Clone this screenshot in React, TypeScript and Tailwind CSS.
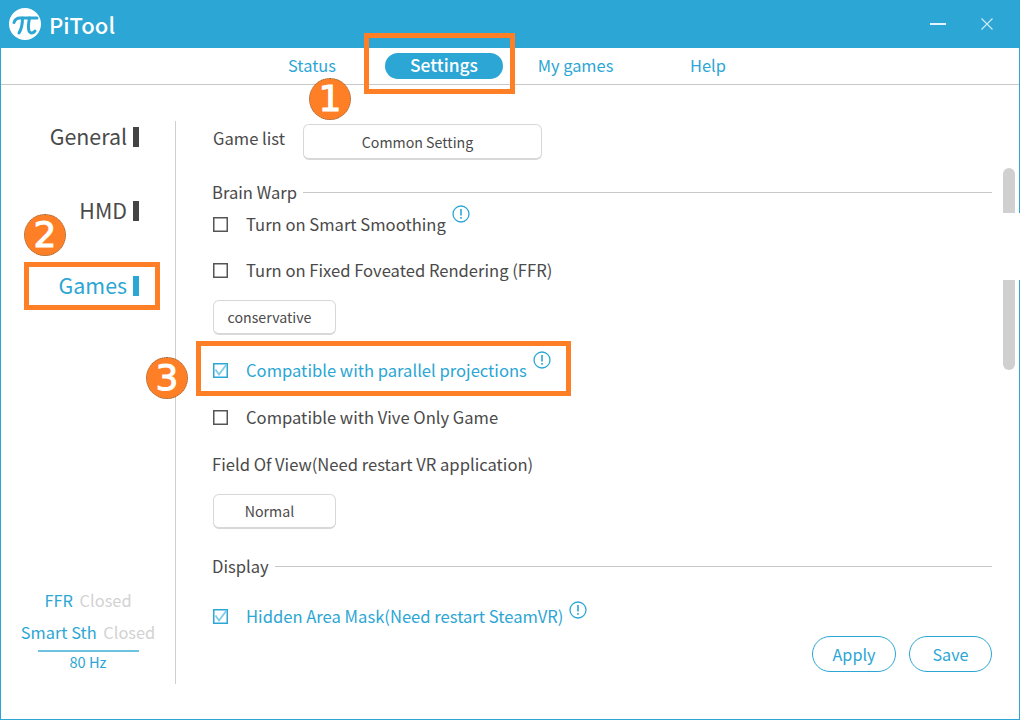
import { type FunctionComponent } from "react";

const font = { fontFamily: '"Noto Sans CJK SC", "Noto Sans", sans-serif' };

const Checkbox: FunctionComponent<{ checked?: boolean }> = ({ checked }) => (
    <svg width="15" height="15" viewBox="0 0 15 15" className="shrink-0 ml-px" fill="none">
        {checked ? (
            <>
                <rect x="0.75" y="0.75" width="13.5" height="13.5" stroke="#2ca6d4" strokeWidth="1.5" />
                <path d="M2.5 6.5 L6 11.5 L13.5 1.5" stroke="#7fcbe6" strokeWidth="1.8" />
            </>
        ) : (
            <rect x="0.75" y="0.75" width="13.5" height="13.5" stroke="#555" strokeWidth="1.5" />
        )}
    </svg>
);

const Info = () => (
    <svg width="18" height="18" viewBox="0 0 18 18" fill="none" className="shrink-0">
        <circle cx="9" cy="9" r="8" stroke="#2ca6d4" strokeWidth="1.3" />
        <path d="M9 4 V10.5" stroke="#2ca6d4" strokeWidth="1.6" />
        <path d="M9 12 V13.8" stroke="#2ca6d4" strokeWidth="1.6" />
    </svg>
);

const CheckRow: FunctionComponent<{ label: string; checked?: boolean; info?: boolean; infoLow?: boolean; className: string }> = ({
    label,
    checked,
    info,
    infoLow,
    className,
}) => (
    <div className={`flex items-center h-[24px] ${className}`}>
        <Checkbox checked={checked} />
        <span className={`ml-[18px] text-[16.6px] leading-[24px] -mt-px whitespace-nowrap ${checked ? "text-[#2ca6d4]" : "text-[#4a4a4a]"}`}>
            {label}
        </span>
        {info && (
            <span className={`ml-[6px] ${infoLow ? "-mt-[12px]" : "-mt-[21px]"}`}>
                <Info />
            </span>
        )}
    </div>
);

const SectionTitle: FunctionComponent<{ label: string; className: string }> = ({ label, className }) => (
    <div className={`flex items-center h-[24px] ${className}`}>
        <span className="text-[16.6px] leading-[24px] -mt-px text-[#4a4a4a] whitespace-nowrap">{label}</span>
        <div className="flex-1 h-px bg-[#c8c8c8] ml-[6px]" />
    </div>
);

const SelectBox: FunctionComponent<{ label: string; className: string }> = ({ label, className }) => (
    <div className={`flex items-center justify-center h-[35px] w-[123px] ml-px pr-[10px] pt-[2px] rounded-[6px] border border-[#d8d8d8] border-b-2 text-[14.2px] text-[#4a4a4a] ${className}`}>
        {label}
    </div>
);

const SideItem: FunctionComponent<{ label: string; active?: boolean; className: string }> = ({ label, active, className }) => (
    <div className={`flex items-center justify-end h-[34px] pr-[36px] ${className}`}>
        <span className={`text-[21.4px] leading-[34px] -mt-[3px] ${active ? "text-[#2ca6d4]" : "text-[#4a4a4a]"}`}>{label}</span>
        <div className={`w-[6px] h-[20px] ml-[6px] ${active ? "bg-[#2ca6d4]" : "bg-[#444]"}`} />
    </div>
);

const Badge: FunctionComponent<{ n: string; className: string }> = ({ n, className }) => (
    <div className={`absolute w-[42px] h-[42px] rounded-full bg-[#ff7f27] border border-dotted border-[#7a6a50] flex items-center justify-center text-white text-[36px] leading-none font-['DejaVu_Sans'] [-webkit-text-stroke:1px_white] ${className}`}>
        {n}
    </div>
);

export default function App() {
    return (
        <div className="relative w-[1020px] h-[720px] bg-white flex flex-col border-x border-b border-[#2ca6d4]" style={font}>
            {/* title bar */}
            <div className="-mx-px h-[48px] shrink-0 bg-[#2ca6d4] flex items-center pl-[9px] pr-[27px]">
                <svg width="32" height="32" viewBox="0 0 32 32" className="shrink-0">
                    <circle cx="16" cy="16" r="16" fill="#fff" />
                    <path d="M5 14.5 C6 11.5 8.5 10 11 10 H28" fill="none" stroke="#2ca6d4" strokeWidth="3" strokeLinecap="round" />
                    <path d="M13.5 10 C13.5 16 12.5 21 10 25" fill="none" stroke="#2ca6d4" strokeWidth="3" strokeLinecap="round" />
                    <path d="M20.5 10 C19.5 15 19 20 20 23 C21 25.5 24.5 25.5 26 23" fill="none" stroke="#2ca6d4" strokeWidth="3" strokeLinecap="round" />
                </svg>
                <span className="ml-[8px] text-white text-[22px] font-medium leading-none">PiTool</span>
                <div className="ml-auto flex items-center gap-[35px]">
                    <div className="w-[16px] h-[2px] bg-[#e4f4fa]" />
                    <svg width="12" height="12" viewBox="0 0 12 12" fill="none">
                        <path d="M0.5 0.5 L11.5 11.5 M11.5 0.5 L0.5 11.5" stroke="#cfeaf5" strokeWidth="1.2" />
                    </svg>
                </div>
            </div>

            {/* tabs */}
            <div className="h-[37px] shrink-0 border-b border-[#c8c8c8] flex items-center text-[16.4px] text-[#2ca6d4] pb-[1px] whitespace-nowrap">
                <span className="ml-[287px] w-[48px] text-center">Status</span>
                <span className="ml-[49px] w-[118px] h-[26px] rounded-full bg-[#2ca6d4] text-white text-[17.4px] font-medium flex items-center justify-center">Settings</span>
                <span className="ml-[34px] w-[77px] text-center">My games</span>
                <span className="ml-[76px] w-[36px] text-center">Help</span>
            </div>

            {/* body */}
            <div className="flex flex-1 min-h-0">
                <div className="relative w-[175px] shrink-0 mt-[36px] mb-[35px] border-r border-[#cfcfcf]">
                    <SideItem label="General" className="mt-[-1px]" />
                    <SideItem label="HMD" className="mt-[40px]" />
                    <SideItem label="Games" active className="mt-[41px]" />
                    <div className="absolute bottom-[11px] left-0 right-0 flex flex-col items-center text-[#2ca6d4]">
                        <div className="text-[16.4px] leading-[24px] whitespace-nowrap">
                            FFR <span className="ml-[3px] text-[#d2d2d2]">Closed</span>
                        </div>
                        <div className="text-[16.4px] leading-[24px] mt-[8px] whitespace-nowrap">
                            Smart Sth <span className="ml-[3px] text-[#d2d2d2]">Closed</span>
                        </div>
                        <div className="w-[101px] h-[2px] bg-[#6fc3e2] mt-[6px]" />
                        <div className="text-[14.6px] leading-[22px] -mt-px">80 Hz</div>
                    </div>
                </div>

                <div className="flex-1 pl-[36px] pr-[27px] pt-[39px] flex flex-col">
                    <div className="flex items-center h-[36px]">
                        <span className="text-[16.6px] text-[#4a4a4a] w-[91px] pl-px -mt-[8px]">Game list</span>
                        <div className="flex items-center justify-center w-[239px] h-[36px] pr-[10px] pt-[2px] rounded-[6px] border border-[#d8d8d8] border-b-2 text-[14.2px] text-[#4a4a4a]">
                            Common Setting
                        </div>
                    </div>
                    <SectionTitle label="Brain Warp" className="mt-[20px]" />
                    <CheckRow label="Turn on Smart Smoothing" info className="mt-[8px]" />
                    <CheckRow label="Turn on Fixed Foveated Rendering (FFR)" className="mt-[22px]" />
                    <SelectBox label="conservative" className="mt-[18px]" />
                    <CheckRow label="Compatible with parallel projections" checked info className="mt-[23px]" />
                    <CheckRow label="Compatible with Vive Only Game" className="mt-[23px]" />
                    <div className="text-[16.6px] leading-[24px] text-[#4a4a4a] mt-[23px]">Field Of View(Need restart VR application)</div>
                    <SelectBox label="Normal" className="mt-[18px]" />
                    <SectionTitle label="Display" className="mt-[25px]" />
                    <CheckRow label="Hidden Area Mask(Need restart SteamVR)" checked info infoLow className="mt-[26px]" />
                    <div className="flex justify-end gap-[13px] mt-[8px] text-[16.2px] text-[#2ca6d4]">
                        <div className="w-[84px] h-[36px] rounded-full border-[1.5px] border-[#2ca6d4] flex items-center justify-center">Apply</div>
                        <div className="w-[83px] h-[36px] rounded-full border-[1.5px] border-[#2ca6d4] flex items-center justify-center">Save</div>
                    </div>
                </div>
            </div>

            {/* scrollbar, split by a white gap in the capture */}
            <div className="absolute left-[1002px] top-[168px] w-[12px] h-[45px] bg-[#d0d0d0] rounded-t-full" />
            <div className="absolute left-[1002px] top-[213px] w-[18px] h-[67px] bg-white" />
            <div className="absolute left-[1002px] top-[280px] w-[12px] h-[90px] bg-[#d0d0d0] rounded-b-full" />

            {/* annotations */}
            <div className="absolute left-[363px] top-[33px] w-[151px] h-[61px] border-[5px] border-[#ff7f27]" />
            <div className="absolute left-[23px] top-[262px] w-[136px] h-[48px] border-[5px] border-[#ff7f27]" />
            <div className="absolute left-[195px] top-[341px] w-[375px] h-[55px] border-[5px] border-[#ff7f27]" />
            <Badge n="1" className="left-[308px] top-[78px]" />
            <Badge n="2" className="left-[23px] top-[214px]" />
            <Badge n="3" className="left-[145px] top-[357px]" />
        </div>
    );
}
